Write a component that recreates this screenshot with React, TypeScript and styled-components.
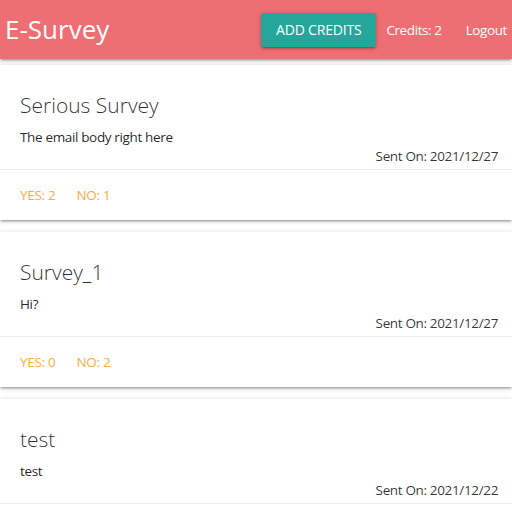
import React from "react";
import styled, { createGlobalStyle } from "styled-components";

const GlobalStyle = createGlobalStyle`
  html, body { margin: 0; padding: 0; background: #ffffff; }
  body {
    font-family: "Open Sans", "Noto Sans", "Liberation Sans", sans-serif;
    color: rgba(0, 0, 0, 0.87);
  }
  * { box-sizing: border-box; }
`;

const Nav = styled.nav`
  height: 59px;
  background: #ee6e73;
  display: flex;
  align-items: center;
  padding: 0 5px;
  box-shadow: 0 2px 2px 0 rgba(0, 0, 0, 0.14), 0 3px 1px -2px rgba(0, 0, 0, 0.12),
    0 1px 5px 0 rgba(0, 0, 0, 0.2);
  position: relative;
  z-index: 1;
`;

const Brand = styled.a`
  color: #fff;
  font-size: 26px;
  line-height: 59px;
  text-decoration: none;
`;

const NavRight = styled.div`
  margin-left: auto;
  display: flex;
  align-items: center;
`;

const Button = styled.button`
  height: 34px;
  padding: 0 15px;
  border: none;
  border-radius: 2px;
  background: #26a69a;
  color: #fff;
  font-family: inherit;
  font-size: 14px;
  letter-spacing: -0.2px;
  text-transform: uppercase;
  box-shadow: 0 2px 2px 0 rgba(0, 0, 0, 0.14), 0 3px 1px -2px rgba(0, 0, 0, 0.12),
    0 1px 5px 0 rgba(0, 0, 0, 0.2);
  margin-right: 10px;
`;

const NavLink = styled.a<{ $gap?: number }>`
  color: #fff;
  font-size: 13.5px;
  letter-spacing: -0.4px;
  text-decoration: none;
  margin-left: ${(p) => p.$gap ?? 0}px;
`;

const List = styled.main`
  display: flex;
  flex-direction: column;
  gap: 12px;
  padding-top: 6px;
`;

const Card = styled.section`
  background: #fff;
  box-shadow: 0 2px 2px 0 rgba(0, 0, 0, 0.14), 0 3px 1px -2px rgba(0, 0, 0, 0.12),
    0 1px 5px 0 rgba(0, 0, 0, 0.2);
`;

const Content = styled.div`
  padding: 24px 14px 3px 20px;
`;

const Title = styled.h2`
  margin: 0 0 6px;
  font-size: 21px;
  font-weight: 300;
  line-height: 32px;
  color: rgba(0, 0, 0, 0.82);
`;

const Body = styled.p`
  margin: 0;
  font-size: 13.5px;
  letter-spacing: -0.35px;
  line-height: 20px;
`;

const Sent = styled.p`
  margin: 0;
  font-size: 13.5px;
  letter-spacing: -0.35px;
  line-height: 19px;
  text-align: right;
  color: rgba(0, 0, 0, 0.8);
`;

const Action = styled.div`
  border-top: 1px solid rgba(160, 160, 160, 0.2);
  padding: 16px 20px;
  display: flex;
  gap: 21px;
`;

const Count = styled.a`
  color: #ffab40;
  font-size: 13.5px;
  letter-spacing: -0.3px;
  line-height: 18px;
  text-transform: uppercase;
`;

const surveys = [
  { title: "Serious Survey", body: "The email body right here", date: "2021/12/27", yes: 2, no: 1 },
  { title: "Survey_1", body: "Hi?", date: "2021/12/27", yes: 0, no: 2 },
  { title: "test", body: "test", date: "2021/12/22", yes: 0, no: 0 },
];

export default function App() {
  return (
    <>
      <GlobalStyle />
      <Nav>
        <Brand>E-Survey</Brand>
        <NavRight>
          <Button>Add Credits</Button>
          <NavLink>Credits: 2</NavLink>
          <NavLink $gap={24}>Logout</NavLink>
        </NavRight>
      </Nav>
      <List>
        {surveys.map((s, i) => (
          <Card key={i}>
            <Content>
              <Title>{s.title}</Title>
              <Body>{s.body}</Body>
              <Sent>Sent On: {s.date}</Sent>
            </Content>
            <Action>
              <Count>Yes: {s.yes}</Count>
              <Count>No: {s.no}</Count>
            </Action>
          </Card>
        ))}
      </List>
    </>
  );
}
